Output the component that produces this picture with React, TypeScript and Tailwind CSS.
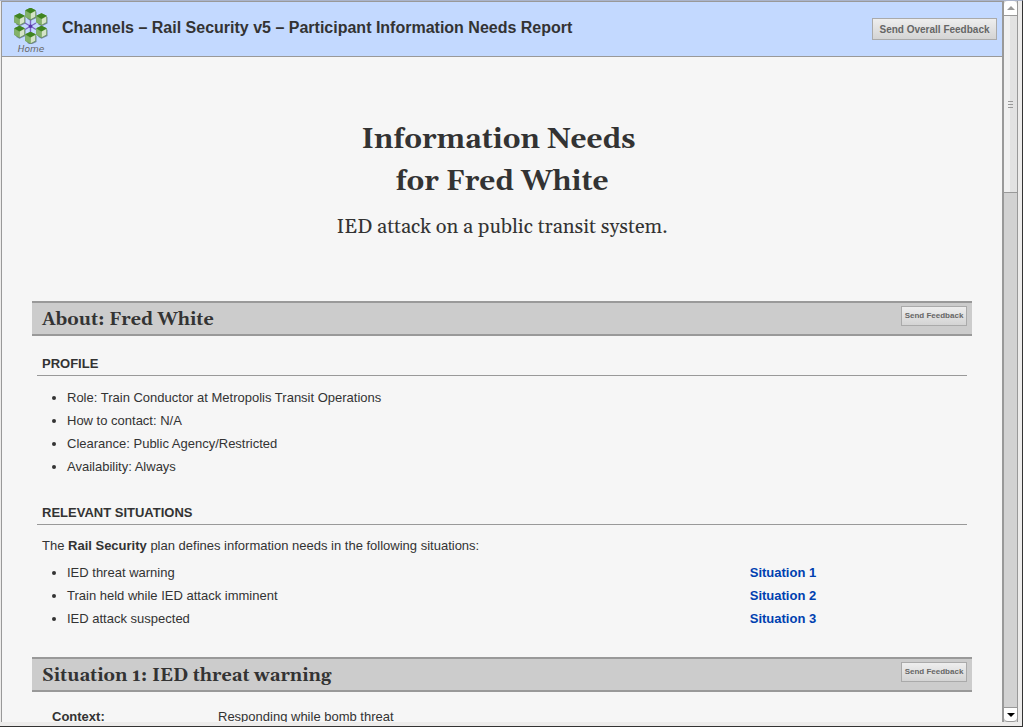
import type { ReactNode } from 'react';

const serif = "font-['Georgia','Gelasio','Liberation_Serif',serif]";

const cubes = [
  [16.5, 0],
  [5.5, 5.5],
  [27.5, 5.5],
  [5.5, 18],
  [27.5, 18],
  [16.5, 24],
];

function HomeLogo() {
  return (
    <svg viewBox="0 0 34 36" className="h-9 w-[34px]" aria-hidden="true">
      <g stroke="#7a63c4" strokeWidth="1.4">
        <path d="M16.5 11v14M11 15l11 6.5M22 15l-11 6.5" />
      </g>
      <circle cx="16.5" cy="18.2" r="1.8" fill="#5636ab" />
      {cubes.map(([x, y]) => (
        <g key={`${x}-${y}`}>
          <path d={`M${x + 4.5} ${y + 3}l1.5 .8v6.2l-6 2.8l-3.5 -2z`} fill="#5f7080" opacity=".8" />
          <path d={`M${x} ${y - 0.3}l5.2 2.6v6.7l-5.2 2.8l-5.2 -2.8v-6.7z`} fill="#5d9440" />
          <path d={`M${x} ${y - 0.3}l5.2 2.6l-5.2 3l-5.2 -3z`} fill="#3f8420" />
          <path d={`M${x - 5} ${y + 2.8}l5 2.9v5.8l-5 -2.7z`} fill="#83b269" />
          <path d={`M${x + 4.8} ${y + 2.9}l-4.6 2.7v5.7l4.6 -2.5z`} fill="#d5e4c8" />
        </g>
      ))}
    </svg>
  );
}

function SectionBar({ title }: { title: string }) {
  return (
    <div className="flex h-[35px] items-start justify-between border-y-2 border-[#999] bg-[#ccc] pr-[5px] pl-2.5">
      <h2 className={`${serif} pt-px text-lg leading-[31px] font-bold`}>{title}</h2>
      <button className="mt-[3px] h-5 w-[66px] border border-[#aaa] bg-linear-to-b from-[#eee] to-[#d4d4d4] text-[8px] font-bold whitespace-nowrap text-[#666]">
        Send Feedback
      </button>
    </div>
  );
}

function SubHeading({ children }: { children: ReactNode }) {
  return (
    <h3 className="mx-[5px] h-6 border-b border-[#999] px-[5px] text-[13px] leading-6 font-bold uppercase">{children}</h3>
  );
}

const profile = [
  'Role: Train Conductor at Metropolis Transit Operations',
  'How to contact: N/A',
  'Clearance: Public Agency/Restricted',
  'Availability: Always',
];

const situations = ['IED threat warning', 'Train held while IED attack imminent', 'IED attack suspected'];

function Scrollbar() {
  return (
    <div className="flex w-4 shrink-0 flex-col border-r border-l-2 border-[#999] bg-[#d2d2d2]" aria-hidden="true">
      <div className="flex h-3.5 items-center justify-center rounded-t-sm bg-white">
        <svg viewBox="0 0 8 4" className="h-1 w-2"><path d="M4 0l4 4H0z" fill="#999" /></svg>
      </div>
      <div className="flex h-[178px] flex-col items-center justify-center gap-0.5 border-y border-[#999] bg-linear-to-r from-[#f0f0f0] from-50% to-[#e2e2e2] to-50%">
        <span className="h-px w-[5px] bg-[#999]" />
        <span className="h-px w-[5px] bg-[#999]" />
        <span className="h-px w-[5px] bg-[#999]" />
      </div>
      <div className="grow" />
      <div className="flex h-[15px] items-center justify-center rounded-b-sm border-y border-[#999] bg-white">
        <svg viewBox="0 0 8 4" className="h-1 w-2"><path d="M0 0h8L4 4z" fill="#000" /></svg>
      </div>
    </div>
  );
}

export default function App() {
  return (
    <div className="flex h-screen border-t border-r border-b border-t-[#aab4cb] border-r-[#333] border-b-[#333] bg-[#edeceb] pr-1 pb-1 pl-px font-['Liberation_Sans',Arial,sans-serif] text-[13px] text-[#333]">
      <div className="flex min-w-0 grow flex-col overflow-hidden border-t border-l border-[#999] bg-[#f6f6f6]">
        <header className="flex h-[55px] shrink-0 items-center border-b border-[#999] bg-[#c3d9ff] pr-[5px] pl-3">
          <a href="#home" className="flex w-[34px] flex-col items-center pt-1">
            <HomeLogo />
            <span className="font-['DejaVu_Sans',sans-serif] text-[9px] leading-[10px] text-[#666] italic">Home</span>
          </a>
          <h1 className="ml-3.5 grow pb-0.5 text-base font-bold">Channels – Rail Security v5 – Participant Information Needs Report</h1>
          <button className="h-[22px] w-[125px] border border-[#aaa] bg-linear-to-b from-[#eee] to-[#d4d4d4] text-[10px] font-bold whitespace-nowrap text-[#666]">
            Send Overall Feedback
          </button>
        </header>
        <main className="min-h-0 grow overflow-hidden px-[30px]">
          <div className={`${serif} pt-[62px] pb-14 text-center`}>
            <h1 className="text-[28px] leading-[42px] font-bold">
              Information Needs&nbsp;
              <br />
              for Fred White
            </h1>
            <p className="pt-1.5 text-xl leading-9">IED attack on a public transit system.</p>
          </div>
          <SectionBar title="About: Fred White" />
          <div className="pt-4">
            <SubHeading>Profile</SubHeading>
            <ul className="list-disc pt-2.5 pb-[23px] pl-[35px]">
              {profile.map((line) => (
                <li key={line} className="leading-[23px]">{line}</li>
              ))}
            </ul>
            <SubHeading>Relevant Situations</SubHeading>
            <p className="px-2.5 pt-[9px] leading-[23px]">
              The <b>Rail Security</b> plan defines information needs in the following situations:
            </p>
            <ul className="list-disc pt-1 pb-[27px] pl-[35px]">
              {situations.map((name, i) => (
                <li key={name} className="leading-[23px]">
                  <div className="flex">
                    <span className="w-3/4">{name}</span>
                    <a href={`#situation-${i + 1}`} className="pl-1 font-bold text-[#0040b0]">Situation {i + 1}</a>
                  </div>
                </li>
              ))}
            </ul>
          </div>
          <SectionBar title="Situation 1: IED threat warning" />
          <dl className="flex px-5 pt-[13px] leading-[23px]">
            <dt className="w-[166px] font-bold">Context:</dt>
            <dd>Responding while bomb threat</dd>
          </dl>
        </main>
      </div>
      <Scrollbar />
    </div>
  );
}
